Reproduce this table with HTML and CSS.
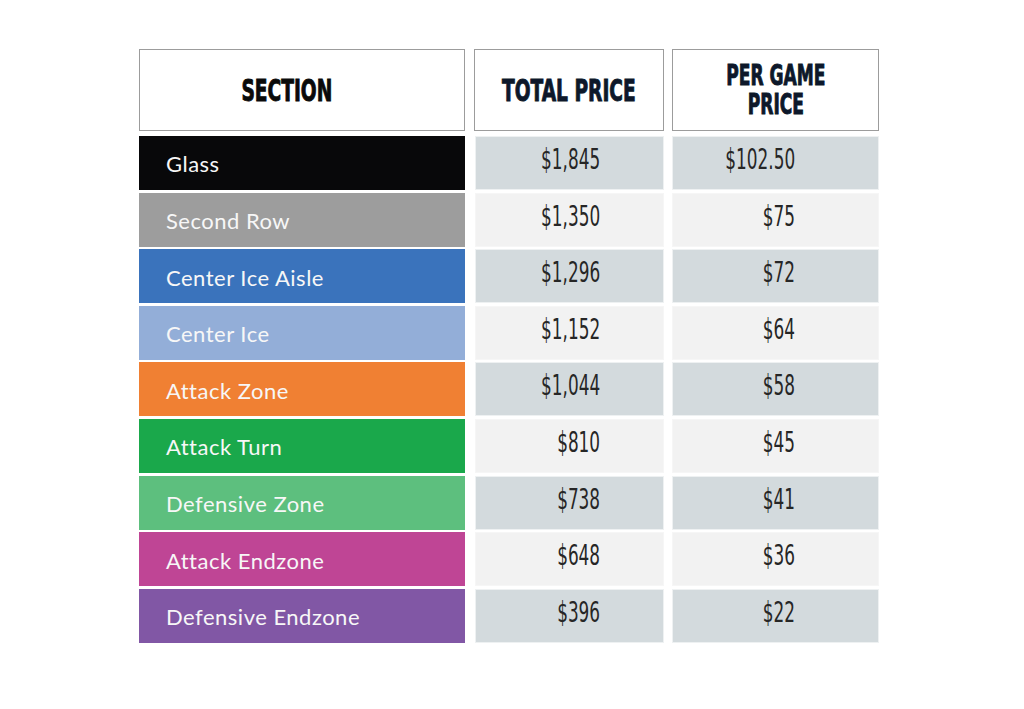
FILE: index.html
```html
<!DOCTYPE html>
<html lang="en">
<head>
<meta charset="utf-8">
<title>Season Ticket Pricing</title>
<link rel="stylesheet" href="styles.css">
</head>
<body>
<div class="page">
  <div class="pricing">
    <div class="head head-section"><span class="head-text">SECTION</span></div>
    <div class="head"><span class="head-text navy">TOTAL PRICE</span></div>
    <div class="head"><span class="head-text navy two">PER GAME<br>PRICE</span></div>

    <div class="label c-glass">Glass</div>
    <div class="price dark total"><span class="num">$1,845</span></div>
    <div class="price dark per"><span class="num">$102.50</span></div>

    <div class="label c-second">Second Row</div>
    <div class="price light total"><span class="num">$1,350</span></div>
    <div class="price light per"><span class="num">$75</span></div>

    <div class="label c-aisle">Center Ice Aisle</div>
    <div class="price dark total"><span class="num">$1,296</span></div>
    <div class="price dark per"><span class="num">$72</span></div>

    <div class="label c-center">Center Ice</div>
    <div class="price light total"><span class="num">$1,152</span></div>
    <div class="price light per"><span class="num">$64</span></div>

    <div class="label c-attack">Attack Zone</div>
    <div class="price dark total"><span class="num">$1,044</span></div>
    <div class="price dark per"><span class="num">$58</span></div>

    <div class="label c-turn">Attack Turn</div>
    <div class="price light total"><span class="num">$810</span></div>
    <div class="price light per"><span class="num">$45</span></div>

    <div class="label c-defzone">Defensive Zone</div>
    <div class="price dark total"><span class="num">$738</span></div>
    <div class="price dark per"><span class="num">$41</span></div>

    <div class="label c-attend">Attack Endzone</div>
    <div class="price light total"><span class="num">$648</span></div>
    <div class="price light per"><span class="num">$36</span></div>

    <div class="label c-defend">Defensive Endzone</div>
    <div class="price dark total"><span class="num">$396</span></div>
    <div class="price dark per"><span class="num">$22</span></div>
  </div>
</div>
</body>
</html>
```

FILE: styles.css
```css
* { box-sizing: border-box; }

html, body {
  margin: 0;
  padding: 0;
  background: #ffffff;
}

.page {
  width: 1024px;
  height: 709px;
  padding: 49px 0 0 139px;
}

.pricing {
  display: grid;
  grid-template-columns: 327px 190px 207px;
  grid-template-rows: 84.4px repeat(9, 54px);
  column-gap: 8px;
  row-gap: 2.6px;
}

.head {
  border: 1px solid #9c9c9c;
  background: #ffffff;
  display: flex;
  align-items: center;
  justify-content: center;
  height: 82px;
  align-self: start;
}

.head-section {
  padding-right: 30px;
  margin-right: 1px;
}

.head-text {
  display: inline-block;
  white-space: nowrap;
  font-family: "DejaVu Sans Condensed", "DejaVu Sans", sans-serif;
  font-stretch: condensed;
  font-weight: 700;
  font-size: 30px;
  line-height: 29px;
  color: #0a0a0a;
  text-align: center;
  transform: scaleX(0.69);
  -webkit-text-stroke: 0.9px currentColor;
}

.head-text.two {
  font-size: 27.5px;
}

.navy { color: #0d182a; }

.label {
  display: flex;
  align-items: center;
  padding-left: 27px;
  margin-right: 1px;
  font-family: Lato, "Open Sans", sans-serif;
  font-size: 22px;
  letter-spacing: 0.5px;
  color: #f7f7f7;
  padding-top: 2px;
}

.c-glass   { background: #08080a; }
.c-second  { background: #9d9d9d; }
.c-aisle   { background: #3a73bc; }
.c-center  { background: #93aed8; }
.c-attack  { background: #f08033; }
.c-turn    { background: #1aa84b; }
.c-defzone { background: #5dbf7e; }
.c-attend  { background: #bf4595; }
.c-defend  { background: #8157a5; }

.price {
  display: flex;
  align-items: center;
  justify-content: flex-end;
  border: 1px solid #eef1f2;
}

.price.dark { background: #d3dadd; }
.price.light { background: #f2f2f2; border-color: #f6f6f6; }

.price.total { padding-right: 63px; margin-left: 1px; }
.price.per { padding-right: 83px; }

.num {
  display: inline-block;
  white-space: nowrap;
  font-family: "DejaVu Sans Condensed", "DejaVu Sans", sans-serif;
  font-stretch: condensed;
  font-size: 28px;
  color: #262626;
  transform: scaleX(0.67);
  transform-origin: right center;
  margin-top: -7px;
}
```
